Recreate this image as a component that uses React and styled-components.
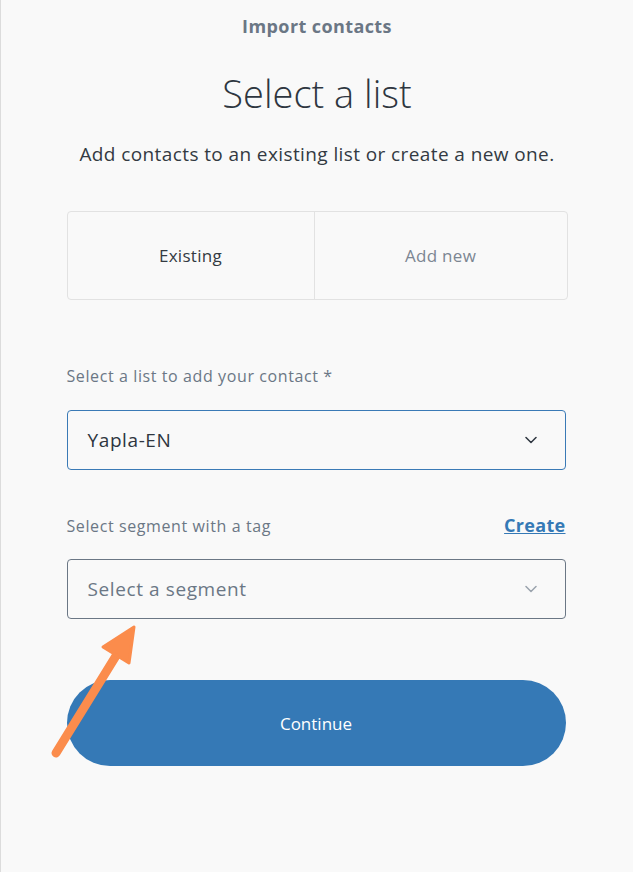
import styled, { createGlobalStyle } from "styled-components";

const GlobalStyle = createGlobalStyle`
  html, body {
    margin: 0;
    padding: 0;
    background: #f9f9f9;
  }
  body {
    font-family: "Open Sans", "Noto Sans", sans-serif;
  }
`;

const Page = styled.div`
  position: relative;
  min-height: 872px;
  box-sizing: border-box;
  border-left: 1px solid #dcdcdc;
  background: #f9f9f9;
  display: flex;
  flex-direction: column;
  align-items: center;
`;

const Eyebrow = styled.div`
  margin-top: 15px;
  font-size: 18px;
  font-weight: 700;
  letter-spacing: 0.4px;
  color: #6b7785;
  line-height: 22px;
`;

const Title = styled.h1`
  margin: 34px 0 0;
  font-size: 38px;
  font-weight: 300;
  color: #2e3640;
  line-height: 44px;
`;

const Subtitle = styled.p`
  margin: 27px 0 0;
  font-size: 19px;
  letter-spacing: 0.4px;
  color: #333a42;
  line-height: 25px;
`;

const Column = styled.div`
  width: 501px;
  display: flex;
  flex-direction: column;
`;

const Tabs = styled.div`
  margin-top: 44px;
  height: 89px;
  display: grid;
  grid-template-columns: 246px 1fr;
  border: 1px solid #e2e2e2;
  border-radius: 4px;
  box-sizing: border-box;
`;

const Tab = styled.div`
  display: flex;
  align-items: center;
  justify-content: center;
  font-size: 17px;
  letter-spacing: 0.3px;
  color: ${({ $active }) => ($active ? "#333a42" : "#7c8692")};
  & + & {
    border-left: 1px solid #e2e2e2;
  }
`;

const LabelRow = styled.div`
  margin-top: ${({ $top }) => $top}px;
  display: flex;
  justify-content: space-between;
  align-items: flex-end;
  width: 499px;
`;

const Label = styled.span`
  font-size: 16px;
  letter-spacing: 0.6px;
  color: #6b7785;
  line-height: 20px;
`;

const CreateLink = styled.a`
  font-size: 18px;
  font-weight: 700;
  letter-spacing: 0.3px;
  color: #3579b6;
  text-decoration: underline;
  line-height: 22px;
`;

const SelectBox = styled.div`
  margin-top: ${({ $top }) => $top}px;
  width: 499px;
  height: 60px;
  box-sizing: border-box;
  border: 1px solid ${({ $focused }) => ($focused ? "#3a7ab6" : "#6b7785")};
  border-radius: 4px;
  display: flex;
  align-items: center;
  justify-content: space-between;
  padding: 0 28px 0 20px;
  font-size: 19px;
  letter-spacing: 0.6px;
  color: ${({ $placeholder }) => ($placeholder ? "#6b7785" : "#2e3640")};
`;

const Chevron = ({ color }) => (
  <svg width="12" height="8" viewBox="0 0 12 8" fill="none">
    <path d="M1 1.5l5 5 5-5" stroke={color} strokeWidth="1.5" strokeLinecap="round" strokeLinejoin="round" />
  </svg>
);

const ContinueButton = styled.button`
  margin-top: 61px;
  width: 499px;
  height: 86px;
  border: none;
  border-radius: 43px;
  background: #3579b6;
  color: #ffffff;
  font-family: inherit;
  font-size: 17px;
`;

const Arrow = styled.svg`
  position: absolute;
  left: 40px;
  top: 615px;
`;

export default function App() {
  return (
    <>
      <GlobalStyle />
      <Page>
        <Eyebrow>Import contacts</Eyebrow>
        <Title>Select a list</Title>
        <Subtitle>Add contacts to an existing list or create a new one.</Subtitle>
        <Column>
          <Tabs>
            <Tab $active>Existing</Tab>
            <Tab>Add new</Tab>
          </Tabs>
          <LabelRow $top={66}>
            <Label>Select a list to add your contact *</Label>
          </LabelRow>
          <SelectBox $top={24} $focused>
            Yapla-EN
            <Chevron color="#2e3640" />
          </SelectBox>
          <LabelRow $top={44}>
            <Label>Select segment with a tag</Label>
            <CreateLink href="#">Create</CreateLink>
          </LabelRow>
          <SelectBox $top={23} $placeholder>
            Select a segment
            <Chevron color="#9aa3ad" />
          </SelectBox>
          <ContinueButton>Continue</ContinueButton>
        </Column>
        <Arrow width="110" height="160" viewBox="0 0 110 160">
          <path d="M15 138 L78 36" stroke="#fb8c4c" strokeWidth="9" strokeLinecap="round" />
          <path d="M93 12 L62 32 L88 48 Z" fill="#fb8c4c" stroke="#fb8c4c" strokeWidth="3" strokeLinejoin="round" />
        </Arrow>
      </Page>
    </>
  );
}
